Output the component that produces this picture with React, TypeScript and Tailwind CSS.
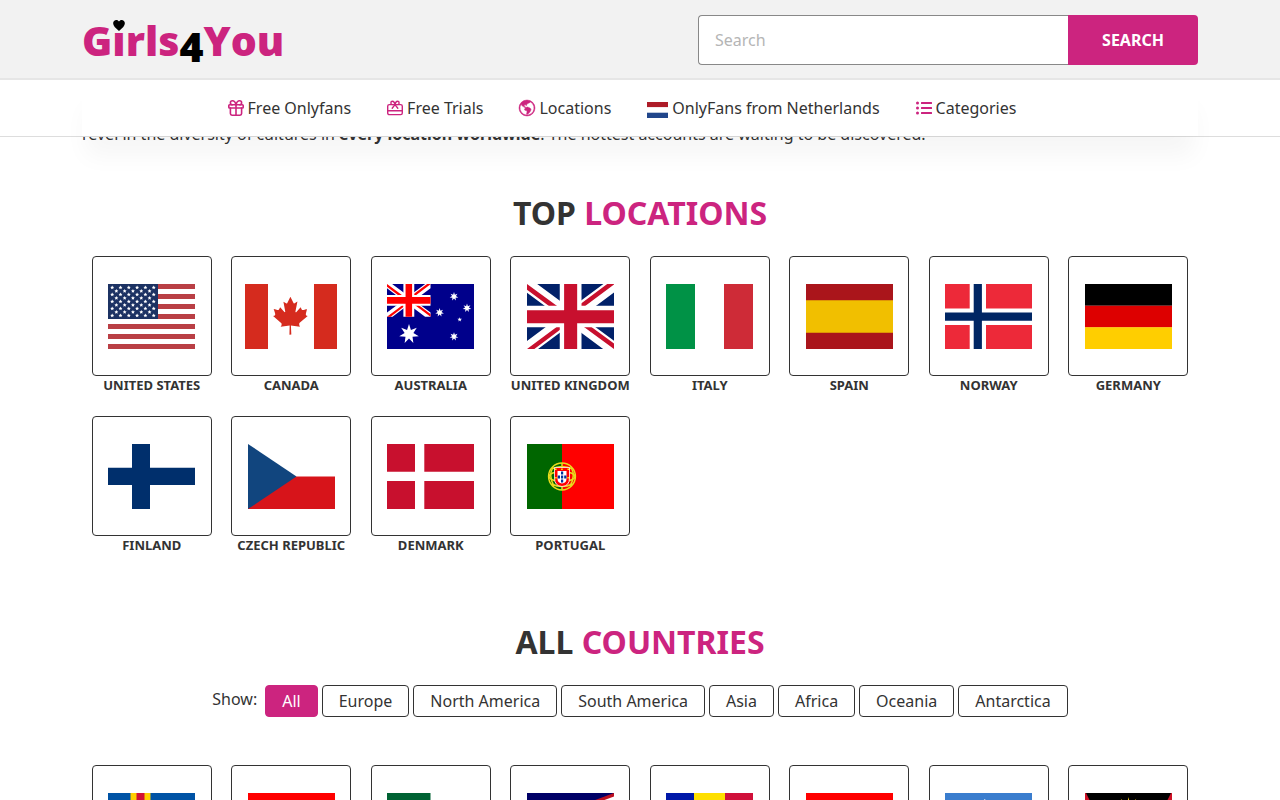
import { useState } from 'react';
import type { ReactNode } from 'react';
import { BsGlobeAmericas } from 'react-icons/bs';
import { FaListUl } from 'react-icons/fa';
import { TbGift } from 'react-icons/tb';
import clsx from 'clsx';

interface Country {
  name: string;
  flag: ReactNode;
}

const REGIONS = ['All', 'Europe', 'North America', 'South America', 'Asia', 'Africa', 'Oceania', 'Antarctica'];

function starPoints(cx: number, cy: number, r: number, spikes = 5, inner = 0.4) {
  return Array.from({ length: spikes * 2 }, (_, i) => {
    const radius = i % 2 === 0 ? r : r * inner;
    const angle = (Math.PI * i) / spikes - Math.PI / 2;
    return `${(cx + radius * Math.cos(angle)).toFixed(2)},${(cy + radius * Math.sin(angle)).toFixed(2)}`;
  }).join(' ');
}

function Flag({ children }: { children: ReactNode }) {
  return (
    <svg viewBox="0 0 87 65" className="h-[65px] w-[87px]" aria-hidden="true">
      {children}
    </svg>
  );
}

// 640x480 drawing, scaled by whoever uses it
function UnionJack({ blue, red }: { blue: string; red: string }) {
  return (
    <>
      <path fill={blue} d="M0 0h640v480H0z" />
      <path fill="#fff" d="m75 0 244 181L562 0h78v62L400 241l240 178v61h-80L320 301 81 480H0v-60l239-178L0 64V0z" />
      <path fill={red} d="m424 281 216 159v40L369 281zm-184 20 6 35L54 480H0zM640 0v3L391 191l2-44L590 0zM0 0l239 176h-60L0 42z" />
      <path fill="#fff" d="M241 0v480h160V0zM0 160v160h640V160z" />
      <path fill={red} d="M0 193v96h640v-96zM273 0v480h96V0z" />
    </>
  );
}

function UsaFlag() {
  const stars: string[] = [];
  for (let row = 0; row < 9; row++) {
    const count = row % 2 === 0 ? 6 : 5;
    for (let col = 0; col < count; col++) {
      stars.push(starPoints(4.2 + col * 8.3 + (row % 2) * 4.15, 3.6 + row * 3.5, 2, 5, 0.5));
    }
  }
  return (
    <Flag>
      <path fill="#fff" d="M0 0h87v65H0z" />
      {[0, 10, 20, 30, 40, 50, 60].map((y) => (
        <path key={y} fill="#b93f45" d={`M0 ${y}h87v5H0z`} />
      ))}
      <path fill="#1c3263" d="M0 0h50v35H0z" />
      {stars.map((points) => (
        <polygon key={points} fill="#fff" points={points} />
      ))}
    </Flag>
  );
}

function CanadaFlag() {
  return (
    <svg viewBox="-19.7 0 679.4 480" className="h-[65px] w-[92px]" aria-hidden="true">
      <path fill="#fff" d="M150 0h340v480H150z" />
      <path
        fill="#d52b1e"
        d="M-19.7 0h169.8v480H-19.7zm509.5 0h169.9v480H489.9zM201 232l-13.3 4.4 61.4 54c4.7 13.7-1.6 17.8-5.6 25l66.6-8.4-1.6 67 13.9-.3-3.1-66.6 66.7 8c-4.1-8.7-7.8-13.3-4-27.2l61.3-51-10.7-4c-8.8-6.8 3.8-32.6 5.6-48.9 0 0-35.7 12.3-38 5.8l-9.2-17.5-32.6 35.8c-3.5.9-5-.5-5.9-3.5l15-74.8-23.8 13.4q-3.2 1.3-5.2-2.2l-23-46-23.6 47.8q-2.8 2.5-5 .7L264 130.8l13.7 74.1c-1.1 3-3.7 3.8-6.7 2.2l-31.2-35.3c-4 6.5-6.8 17.1-12.2 19.5s-23.5-4.5-35.6-7c4.2 14.8 17 39.6 9 47.7"
      />
    </svg>
  );
}

function AustraliaFlag() {
  return (
    <Flag>
      <path fill="#00008b" d="M0 0h87v65H0z" />
      <g transform="scale(0.068)">
        <UnionJack blue="#00008b" red="#f00" />
      </g>
      <g fill="#fff">
        <polygon points={starPoints(22, 50, 10, 7, 0.45)} />
        <polygon points={starPoints(67, 12.5, 4.4, 7, 0.45)} />
        <polygon points={starPoints(80, 24, 4.4, 7, 0.45)} />
        <polygon points={starPoints(52.6, 28.5, 4.4, 7, 0.45)} />
        <polygon points={starPoints(67, 52.6, 4.4, 7, 0.45)} />
        <polygon points={starPoints(72.7, 35.6, 2.4)} />
      </g>
    </Flag>
  );
}

function PortugalFlag() {
  return (
    <Flag>
      <path fill="#060" d="M0 0h35v65H0z" />
      <path fill="red" d="M35 0h52v65H35z" />
      <g fill="none" stroke="#e8dc1c" strokeWidth="1.5">
        <circle cx="35" cy="32.5" r="13.4" />
        <ellipse cx="35" cy="32.5" rx="13" ry="5" />
        <path d="M24.5 25q10.500-5 21 0M24.500 40q10.500 5 21 0M35 19v27M26 23q-5 9 1 19M44 23q5 9-1 19" />
      </g>
      <path fill="#f00" stroke="#fff" strokeWidth=".8" d="M27.500 23.500h15V34q0 8-7.500 8.500-7.500-.5-7.500-8.500z" />
      <path fill="#fff" d="M30.500 27h9v7.500q0 4.500-4.500 5-4.500-.5-4.500-5z" />
      <path fill="#039" d="M34 27.500h2.200v3H34zm0 4h2.200v3H34zm0 4h2.200v3H34zm-3.200-4h2.200v3h-2.200zm6.400 0h2.200v3h-2.200z" />
      <path fill="#ff0" d="M28 24.500h1.500V26H28zm6.200 0h1.500V26h-1.500zm6.300 0H42V26h-1.500zM28.200 33h1.500v1.500h-1.500zm12.200 0h1.500v1.500h-1.500z" />
    </Flag>
  );
}

const TOP_LOCATIONS: Country[] = [
  { name: 'United States', flag: <UsaFlag /> },
  { name: 'Canada', flag: <CanadaFlag /> },
  { name: 'Australia', flag: <AustraliaFlag /> },
  {
    name: 'United Kingdom',
    flag: (
      <svg viewBox="0 0 640 480" preserveAspectRatio="none" className="h-[65px] w-[87px]" aria-hidden="true">
        <UnionJack blue="#012169" red="#c8102e" />
      </svg>
    ),
  },
  {
    name: 'Italy',
    flag: (
      <Flag>
        <path fill="#009246" d="M0 0h29v65H0z" />
        <path fill="#ce2b37" d="M58 0h29v65H58z" />
      </Flag>
    ),
  },
  {
    name: 'Spain',
    flag: (
      <Flag>
        <path fill="#aa151b" d="M0 0h87v65H0z" />
        <path fill="#f1bf00" d="M0 16.300h87v32.400H0z" />
      </Flag>
    ),
  },
  {
    name: 'Norway',
    flag: (
      <Flag>
        <path fill="#ed2939" d="M0 0h87v65H0z" />
        <path fill="#fff" d="M24.700 0h16.300v65H24.700zM0 24.500h87V41H0z" />
        <path fill="#002664" d="M28.700 0h8.200v65h-8.200zM0 28.500h87v8.200H0z" />
      </Flag>
    ),
  },
  {
    name: 'Germany',
    flag: (
      <Flag>
        <path fill="#000" d="M0 0h87v21.700H0z" />
        <path fill="#d00" d="M0 21.700h87v21.700H0z" />
        <path fill="#ffce00" d="M0 43.300h87V65H0z" />
      </Flag>
    ),
  },
  {
    name: 'Finland',
    flag: (
      <Flag>
        <path fill="#002f6c" d="M24 0h18v65H24zM0 23.700h87V41H0z" />
      </Flag>
    ),
  },
  {
    name: 'Czech Republic',
    flag: (
      <Flag>
        <path fill="#d7141a" d="M0 32.500h87V65H0z" />
        <path fill="#11457e" d="M0 0l48.500 32.500L0 65z" />
      </Flag>
    ),
  },
  {
    name: 'Denmark',
    flag: (
      <Flag>
        <path fill="#c8102e" d="M0 0h87v65H0z" />
        <path fill="#fff" d="M28 0h9.300v65H28zM0 27.800h87V37H0z" />
      </Flag>
    ),
  },
  { name: 'Portugal', flag: <PortugalFlag /> },
];

const ALL_COUNTRIES: Country[] = [
  {
    name: 'Åland Islands',
    flag: (
      <Flag>
        <path fill="#0053a5" d="M0 0h87v65H0z" />
        <path fill="#ffce00" d="M22.500 0h20v65h-20zM0 22.500h87v20H0z" />
        <path fill="#d21034" d="M28.500 0h8v65h-8zM0 28.500h87v8H0z" />
      </Flag>
    ),
  },
  {
    name: 'Albania',
    flag: (
      <Flag>
        <path fill="red" d="M0 0h87v65H0z" />
      </Flag>
    ),
  },
  {
    name: 'Algeria',
    flag: (
      <Flag>
        <path fill="#006233" d="M0 0h43.500v65H0z" />
      </Flag>
    ),
  },
  {
    name: 'American Samoa',
    flag: (
      <Flag>
        <path fill="#006" d="M0 0h87v65H0z" />
        <path fill="#bd1021" d="M87 0L0 32.500 87 65z" />
        <path fill="#fff" d="M87 3.500L8 32.500l79 29z" />
      </Flag>
    ),
  },
  {
    name: 'Andorra',
    flag: (
      <Flag>
        <path fill="#0018a8" d="M0 0h28v65H0z" />
        <path fill="#fedf00" d="M28 0h31v65H28z" />
        <path fill="#d0103a" d="M59 0h28v65H59z" />
      </Flag>
    ),
  },
  {
    name: 'Angola',
    flag: (
      <Flag>
        <path fill="red" d="M0 0h87v32.500H0z" />
        <path fill="#000" d="M0 32.500h87V65H0z" />
      </Flag>
    ),
  },
  {
    name: 'Antarctica',
    flag: (
      <Flag>
        <path fill="#3a7dce" d="M0 0h87v65H0z" />
        <path fill="#fff" d="M39 6l5 2.500 10 2 8 12-2 18-14 10-18-6-4-14 12-6 6-10z" />
      </Flag>
    ),
  },
  {
    name: 'Antigua and Barbuda',
    flag: (
      <Flag>
        <path fill="#ce1126" d="M0 0h87v65H0z" />
        <path fill="#000" d="M1 0h85L74 24H13z" />
        <path fill="#0072c6" d="M13 24h61L64 43H23z" />
        <path fill="#fff" d="M23 43h41L43.500 65z" />
        <polygon fill="#fcd116" points={starPoints(43.5, 24, 20, 16, 0.5)} />
      </Flag>
    ),
  },
];

function GiftCardIcon() {
  return (
    <svg
      viewBox="0 0 16 16"
      className="size-4"
      fill="none"
      stroke="currentColor"
      strokeWidth="1.4"
      strokeLinecap="round"
      strokeLinejoin="round"
      aria-hidden="true"
    >
      <rect x=".7" y="4.600" width="14.600" height="10" rx="1.600" />
      <path d="M.7 10.800h14.600M8 4.600 5.200 8.200M8 4.600l2.800 3.600" />
      <path d="M8 4.600C7.600 2.600 6.700 1.300 5.500 1.300a1.600 1.600 0 0 0 0 3.300M8 4.600c.4-2 1.300-3.300 2.500-3.300a1.600 1.600 0 0 1 0 3.300" />
    </svg>
  );
}

function NavLink({ icon, children }: { icon: ReactNode; children: ReactNode }) {
  return (
    <li className="mr-9">
      <a href="#" className="flex items-center gap-1 text-base text-[#333] hover:text-[#cc247f]">
        <span className="text-[#cc247f]">{icon}</span>
        {children}
      </a>
    </li>
  );
}

function SectionTitle({ first, second }: { first: string; second: string }) {
  return (
    <h2 className="mb-6 text-center text-[32px] leading-[38px] font-bold uppercase">
      {first} <span className="text-[#cc247f]">{second}</span>
    </h2>
  );
}

function CountryGrid({ countries, showNames = false }: { countries: Country[]; showNames?: boolean }) {
  return (
    <ul className="grid grid-cols-8">
      {countries.map((country) => (
        <li key={country.name} className="mb-[22px]">
          <a href="#" aria-label={country.name} className="flex flex-col items-center">
            <span className="flex size-[120px] items-center justify-center rounded border border-[#333] bg-white">
              {country.flag}
            </span>
            {showNames && (
              <span className="text-[13px] leading-[18px] font-bold whitespace-nowrap uppercase">{country.name}</span>
            )}
          </a>
        </li>
      ))}
    </ul>
  );
}

export default function App() {
  const [region, setRegion] = useState('All');

  return (
    <div className="h-screen overflow-y-auto bg-white font-['Noto_Sans',sans-serif] text-[#333] [scrollbar-width:none]">
      <header className="sticky top-0 z-10">
        <div className="relative z-10 border-b-2 border-[#e6e6e6] bg-[#f2f2f2]">
          <div className="mx-auto flex h-[78px] max-w-[1116px] items-center justify-between pt-0.5">
            {/* Logo: the heart stands in for the dot of the i */}
            <a
              href="#"
              aria-label="Girls4You"
              className="mt-1.5 flex font-['Open_Sans',sans-serif] text-[41px] leading-none font-extrabold text-[#cc247f]"
            >
              <span>G</span>
              <span className="relative">
                ı
                <svg viewBox="0 0 16 15" className="absolute top-0 left-1/2 h-[11px] w-[12px] -translate-x-1/2 fill-black">
                  <path d="M8 15C3 11 0 8 0 4.500 0 2 2 0 4.300 0 6 0 7.300.8 8 2.200 8.700.8 10 0 11.700 0 14 0 16 2 16 4.500 16 8 13 11 8 15z" />
                </svg>
              </span>
              <span>rls</span>
              <span className="mt-1.5 text-black">4</span>
              <span>You</span>
            </a>
            <form className="flex h-[50px] w-[500px]" onSubmit={(e) => e.preventDefault()}>
              <input
                type="text"
                aria-label="Search"
                placeholder="Search"
                className="min-w-0 flex-1 rounded-l border border-r-0 border-[#888] bg-white px-4 text-base outline-none placeholder:text-[#b5b5b5]"
              />
              <button type="submit" className="w-[130px] rounded-r bg-[#cc247f] text-base font-bold text-white uppercase">
                Search
              </button>
            </form>
          </div>
        </div>

        <nav className="border-b border-[#ddd] bg-white">
          <ul className="mx-auto flex h-14 max-w-[1116px] items-center justify-center bg-white shadow-[0_24px_24px_-4px_rgba(0,0,0,0.04)]">
            <NavLink icon={<TbGift className="size-4" viewBox="2 2 20 20" />}>Free Onlyfans</NavLink>
            <NavLink icon={<GiftCardIcon />}>Free Trials</NavLink>
            <NavLink icon={<BsGlobeAmericas className="size-4 overflow-visible" stroke="currentColor" strokeWidth="0.5" />}>
              Locations
            </NavLink>
            <NavLink
              icon={
                <svg viewBox="0 0 21 16" className="mt-1 h-4 w-[21px]" aria-hidden="true">
                  <path fill="#ae1c28" d="M0 0h21v5.300H0z" />
                  <path fill="#fff" d="M0 5.300h21v5.300H0z" />
                  <path fill="#21468b" d="M0 10.700h21V16H0z" />
                </svg>
              }
            >
              OnlyFans from Netherlands
            </NavLink>
            <NavLink icon={<FaListUl className="size-4" />}>Categories</NavLink>
          </ul>
        </nav>
      </header>

      <main className="mx-auto -mt-[15px] w-full max-w-[1116px]">
        <p className="text-base leading-6">
          revel in the diversity of cultures in <strong>every location worldwide</strong>. The hottest accounts are
          waiting to be discovered.
        </p>

        <section className="mt-12">
          <SectionTitle first="Top" second="Locations" />
          <CountryGrid countries={TOP_LOCATIONS} showNames />
        </section>

        <section className="mt-[47px]">
          <SectionTitle first="All" second="Countries" />
          <div className="mb-12 flex justify-center gap-1">
            <span className="mr-1 text-base leading-7">Show:</span>
            {REGIONS.map((name) => (
              <button
                key={name}
                type="button"
                onClick={() => setRegion(name)}
                className={clsx(
                  'h-8 rounded border px-4 text-base',
                  region === name ? 'border-[#cc247f] bg-[#cc247f] text-white' : 'border-[#333] bg-white'
                )}
              >
                {name}
              </button>
            ))}
          </div>
          <CountryGrid countries={ALL_COUNTRIES} />
        </section>
      </main>
    </div>
  );
}
